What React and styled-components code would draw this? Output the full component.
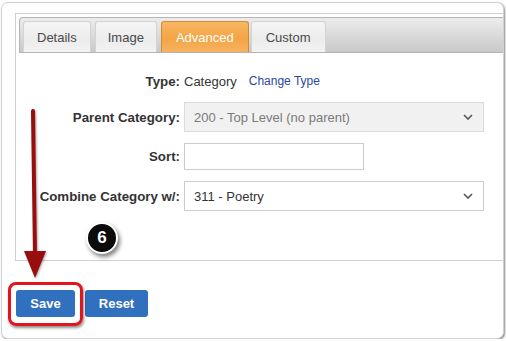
import React from "react";
import styled, {createGlobalStyle} from "styled-components";

const GlobalStyle = createGlobalStyle`
  body {
    margin: 0;
    background: #ffffff;
    font-family: "Liberation Sans", Arial, sans-serif;
  }
`;

const Frame = styled.div`
  position: relative;
  box-sizing: border-box;
  width: 503px;
  height: 337px;
  margin: 2px 0 0 1px;
  padding: 10px 0 0 13px;
  border: 1px solid #d2d2d2;
  border-radius: 7px;
  box-shadow: 1px 1px 2px rgba(0, 0, 0, 0.45);
  overflow: hidden;
  background: #fff;
`;

const Panel = styled.div`
  border: 1px solid #cfcfcf;
  border-right: none;
  padding: 3px 0 0 3px;
  height: 248px;
  box-sizing: border-box;
`;

const TabBar = styled.div`
  display: flex;
  align-items: flex-end;
  height: 36px;
  box-sizing: border-box;
  padding-left: 3px;
  border: 1px solid #b4b4b4;
  border-right: none;
  border-radius: 4px 0 0 0;
  background: linear-gradient(#ececec, #c9c9c9);
`;

const Tab = styled.div`
  height: 31px;
  box-sizing: border-box;
  margin-right: ${p => p.$gap}px;
  padding: 0 ${p => p.$pad}px;
  display: flex;
  align-items: center;
  font-size: 13px;
  color: ${p => (p.$active ? "#ffffff" : "#4a4a4a")};
  border: 1px solid ${p => (p.$active ? "#d58a2e" : "#d3d3d3")};
  border-bottom: none;
  border-radius: 3px 3px 0 0;
  background: ${p =>
    p.$active
      ? "linear-gradient(#f7b664, #f4a545 55%, #f6b260)"
      : "linear-gradient(#f5f5f5, #ececec 55%, #f2f2f2)"};
`;

const Form = styled.div`
  display: grid;
  grid-template-columns: 161px auto;
  column-gap: 4px;
  row-gap: 11px;
  align-items: center;
  justify-items: start;
  padding-top: 18px;
`;

const Label = styled.div`
  justify-self: end;
  font-size: 13.3px;
  font-weight: bold;
  color: #333;
`;

const Value = styled.div`
  height: 20px;
  display: flex;
  align-items: center;
  gap: 12px;
  font-size: 13px;
  color: #333;
`;

const LinkText = styled.span`
  color: #2b46a2;
  font-size: 12px;
`;

const Select = styled.div`
  width: 300px;
  height: 30px;
  box-sizing: border-box;
  display: flex;
  align-items: center;
  justify-content: space-between;
  padding: 0 10px 0 9px;
  border: 1px solid ${p => (p.$disabled ? "#dcdcdc" : "#cccccc")};
  background: ${p => (p.$disabled ? "#f1f1f1" : "#ffffff")};
  color: ${p => (p.$disabled ? "#7a7a7a" : "#333333")};
  font-size: 13px;
`;

const Input = styled.div`
  width: 180px;
  height: 27px;
  box-sizing: border-box;
  border: 1px solid #cccccc;
  background: #fff;
`;

const Buttons = styled.div`
  display: flex;
  gap: 10px;
  padding: 29px 0 0 1px;
`;

const Button = styled.div`
  width: ${p => p.$w}px;
  height: 27px;
  display: flex;
  align-items: center;
  justify-content: center;
  background: #3070bf;
  border-radius: 3px;
  color: #fff;
  font-size: 13px;
  font-weight: bold;
`;

const Highlight = styled.div`
  position: absolute;
  left: 6px;
  top: 279px;
  width: 75px;
  height: 44px;
  box-sizing: border-box;
  border: 3px solid #e2141c;
  border-radius: 8px;
  box-shadow: 1px 2px 3px rgba(0, 0, 0, 0.45);
`;

const Badge = styled.div`
  position: absolute;
  left: 84px;
  top: 219px;
  width: 28px;
  height: 28px;
  border: 2px solid #fff;
  border-radius: 50%;
  background: #0b0b0b;
  box-shadow: 2px 3px 4px rgba(0, 0, 0, 0.5);
  display: flex;
  align-items: center;
  justify-content: center;
  color: #fff;
  font-size: 17px;
  font-weight: bold;
`;

const Arrow = styled.svg`
  position: absolute;
  left: 18px;
  top: 100px;
  filter: drop-shadow(1px 1px 1px rgba(0, 0, 0, 0.35));
`;

const Chevron = () => (
  <svg width="10" height="6" viewBox="0 0 10 6">
    <path d="M1 1l4 4 4-4" fill="none" stroke="#555" strokeWidth="1.6"/>
  </svg>
);

function App() {
  return (
    <>
      <GlobalStyle/>
      <Frame>
        <Panel>
          <TabBar>
            <Tab $pad={13} $gap={4}>Details</Tab>
            <Tab $pad={12} $gap={4}>Image</Tab>
            <Tab $pad={14} $gap={2} $active>Advanced</Tab>
            <Tab $pad={14} $gap={0}>Custom</Tab>
          </TabBar>
          <Form>
            <Label>Type:</Label>
            <Value>Category <LinkText>Change Type</LinkText></Value>
            <Label>Parent Category:</Label>
            <Select $disabled>200 - Top Level (no parent)<Chevron/></Select>
            <Label>Sort:</Label>
            <Input/>
            <Label>Combine Category w/:</Label>
            <Select>311 - Poetry<Chevron/></Select>
          </Form>
        </Panel>
        <Buttons>
          <Button $w={59}>Save</Button>
          <Button $w={63}>Reset</Button>
        </Buttons>
        <Highlight/>
        <Badge>6</Badge>
        <Arrow width="30" height="180" viewBox="0 0 30 180">
          <path d="M13 8 L15 152" stroke="#980d0d" strokeWidth="4" strokeLinecap="round"/>
          <polygon points="4,148 26,148 15,175" fill="#980d0d"/>
        </Arrow>
      </Frame>
    </>
  );
}

export default App;
